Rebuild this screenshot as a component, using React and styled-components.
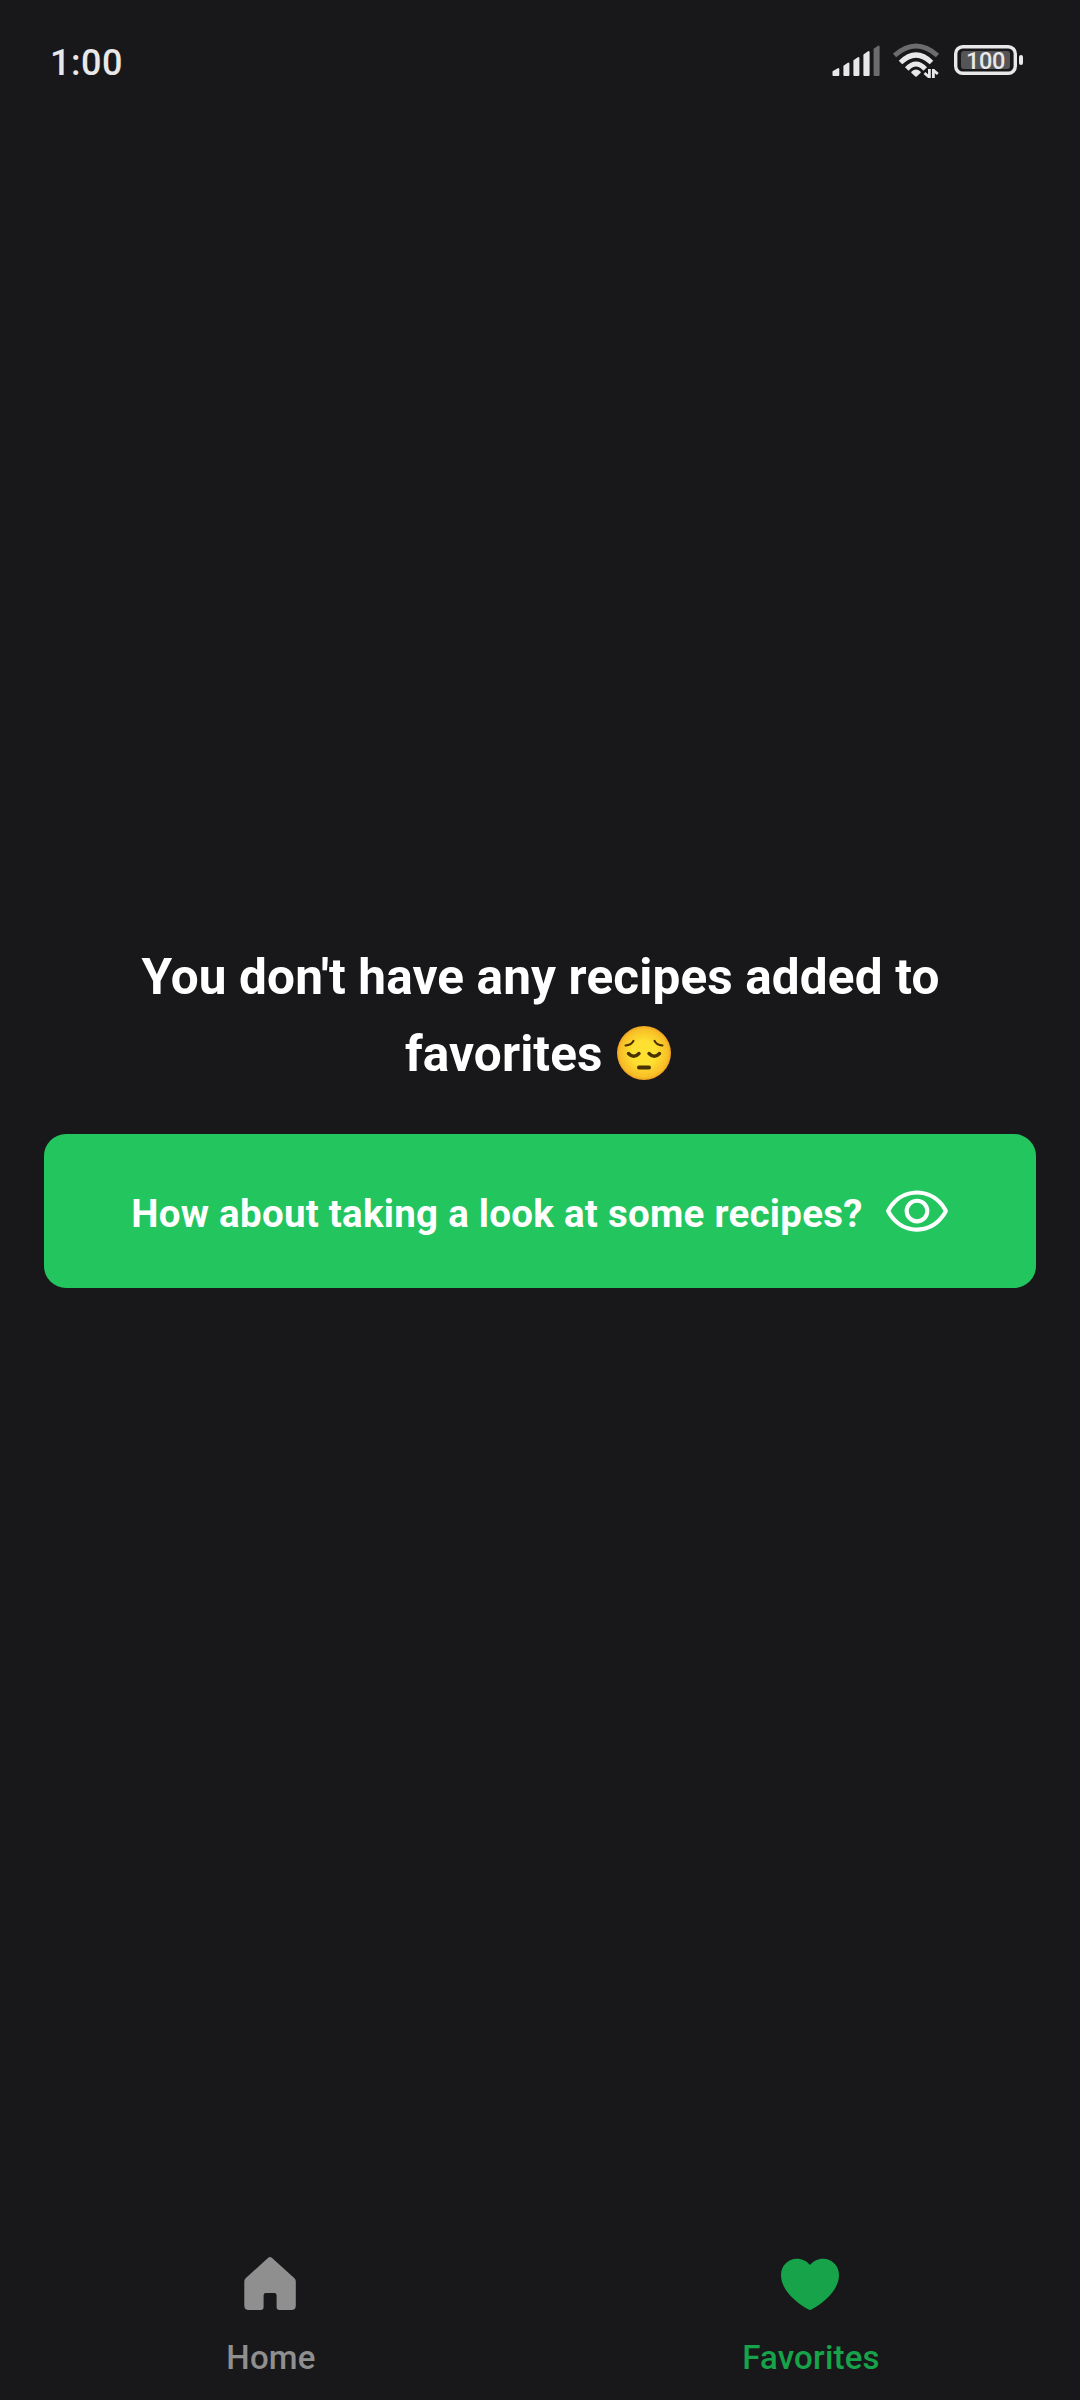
import React from "react";
import styled, { createGlobalStyle } from "styled-components";
import { PiEye } from "react-icons/pi";

const GlobalStyle = createGlobalStyle`
  *, *::before, *::after { box-sizing: border-box; }
  html, body { margin: 0; background: #18181b; }
  body { font-family: Roboto, "Noto Sans", sans-serif; }
`;

const Screen = styled.div`
  display: flex;
  flex-direction: column;
  width: 1080px;
  height: 2400px;
  overflow: hidden;
  background: #18181b;
`;

const StatusBar = styled.header`
  display: flex;
  justify-content: space-between;
  align-items: flex-start;
  height: 120px;
  padding: 41px 57px 0 50px;
`;

const Clock = styled.span`
  padding-top: 1px;
  font-size: 36px;
  font-weight: 500;
  line-height: 42px;
  letter-spacing: 0.5px;
  color: #e8e8e8;
`;

const StatusIcons = styled.div`
  display: flex;
  align-items: flex-start;
  gap: 13px;
`;

const Content = styled.main`
  flex: 1;
  display: flex;
  flex-direction: column;
  padding: 819px 44px 0;
`;

const Message = styled.h1`
  margin: 0 0 41px;
  padding-left: 1px;
  font-size: 49.5px;
  font-weight: 700;
  line-height: 77px;
  letter-spacing: 0.13px;
  text-align: center;
  color: #fff;
`;

const EmojiIcon = styled.svg`
  display: inline-block;
  width: 58px;
  height: 58px;
  margin-right: 3px;
  vertical-align: -11px;
`;

const LookButton = styled.button`
  display: flex;
  align-items: center;
  justify-content: center;
  gap: 21px;
  height: 154px;
  padding: 0 0 0 1px;
  border: 0;
  border-radius: 22px;
  background: #22c55e;
  color: #fff;
  font: 700 38.5px/55px Roboto, "Noto Sans", sans-serif;
  letter-spacing: 0.26px;
`;

const ButtonLabel = styled.span`
  padding-top: 4px;
`;

const TabBar = styled.nav`
  display: flex;
  height: 173px;
`;

const Tab = styled.a`
  flex: 1;
  display: flex;
  flex-direction: column;
  align-items: center;
  gap: 21px;
  padding-top: 24px;
  color: ${({ $active }) => ($active ? "#16a34a" : "#8f8f8f")};
`;

const TabLabel = styled.span`
  padding-left: 2px;
  font-size: 33px;
  font-weight: 500;
  line-height: 40px;
  letter-spacing: 0.2px;
`;

function SignalIcon() {
  return (
    <svg width="48" height="42" viewBox="832 41 48 42" fill="#e8e8e8" stroke="#e8e8e8" strokeWidth="2" strokeLinejoin="round">
      <path d="M833.5 71.8 L838.3 69 V75 H833.5Z M844.4 66.3 L848.4 63.5 V75 H844.4Z M854.4 60.8 L858.4 58 V75 H854.4Z M864.4 55 L868.6 52 V75 H864.4Z" />
      <path d="M874.6 49.3 L878.6 46.5 V75 H874.6Z" fill="#6c6c6e" stroke="#6c6c6e" />
    </svg>
  );
}

function WifiIcon() {
  return (
    <svg width="48" height="42" viewBox="893 41 48 42" fill="none" strokeWidth="5">
      <path d="M894.5 55.5 Q916 36.5 937.5 55.5" stroke="#6c6c6e" />
      <path d="M900.5 62.5 Q916 47.5 931.5 62.5" stroke="#e8e8e8" />
      <path d="M906.8 69 Q916 59 925.2 69" stroke="#e8e8e8" />
      <path d="M912.2 72.3 Q916 69 919.8 72.3 L916 75.7Z" fill="#e8e8e8" stroke="#e8e8e8" strokeWidth="2" strokeLinejoin="round" />
      <path d="M929.4 69 V78 M924.5 73 L929 77 M933.4 78 V69 M933.2 70 L937.8 74" stroke="#e8e8e8" strokeWidth="2.8" />
    </svg>
  );
}

function BatteryIcon() {
  return (
    <svg width="69" height="42" viewBox="954 41 69 42">
      <rect x="955.7" y="46.7" width="59.6" height="26.6" rx="7" fill="none" stroke="#e8e8e8" strokeWidth="3.4" />
      <rect x="961" y="51" width="49" height="18" rx="3" fill="#555557" />
      <rect x="1019" y="55" width="4" height="10" rx="2" fill="#e8e8e8" />
      <text x="985.5" y="69" textAnchor="middle" fontFamily="Roboto, sans-serif" fontWeight="500" fontSize="23.5" letterSpacing="-0.3" fill="#e8e8e8">100</text>
    </svg>
  );
}

function PensiveFace() {
  return (
    <EmojiIcon viewBox="0 0 58 58" role="img" aria-label="Pensive face">
      <defs>
        <radialGradient id="face">
          <stop offset="0.45" stopColor="#fde030" />
          <stop offset="0.9" stopColor="#f8bd27" />
          <stop offset="1" stopColor="#eb9f20" />
        </radialGradient>
      </defs>
      <circle cx="29" cy="29" r="27" fill="url(#face)" />
      <g fill="none" stroke="#493100" strokeLinecap="round">
        <path d="M10.5 21.5 Q16.5 21 18.5 16.8 M47.5 21.5 Q41.5 21 39.5 16.8" strokeWidth="2" />
        <path d="M13.5 29.5 Q18.7 35 24 29.5 M34 29.5 Q39.3 35 44.5 29.5" strokeWidth="3.4" />
        <path d="M24 43.5 H34" strokeWidth="4" />
      </g>
    </EmojiIcon>
  );
}

function HomeIcon() {
  return (
    <svg width="66" height="66" viewBox="0 0 66 66" fill="currentColor">
      <path d="M31.2 6.8 Q33 5.2 34.8 6.8 L57.2 27 Q58.8 28.4 58.8 30.2 V54.5 Q58.8 59 54.3 59 H42 Q39.6 59 39.6 56.6 V44.3 Q39.6 42 37.3 42 H28.9 Q26.6 42 26.6 44.3 V56.6 Q26.6 59 24.2 59 H11.8 Q7.3 59 7.3 54.5 V30.2 Q7.3 28.4 8.9 27Z" />
    </svg>
  );
}

function HeartIcon() {
  return (
    <svg width="66" height="66" viewBox="0 0 66 66" fill="currentColor">
      <path d="M33 14 C36 10 41 7.7 46 7.7 C55 7.7 62 14.8 62 24 C62 38 49 50.5 34.5 58.5 Q33 59.3 31.5 58.5 C17 50.5 4 38 4 24 C4 14.8 11 7.7 20 7.7 C25 7.7 30 10 33 14Z" />
    </svg>
  );
}

export default function App() {
  return (
    <>
      <GlobalStyle />
      <Screen>
        <StatusBar>
          <Clock>1:00</Clock>
          <StatusIcons>
            <SignalIcon />
            <WifiIcon />
            <BatteryIcon />
          </StatusIcons>
        </StatusBar>
        <Content>
          <Message>
            You don't have any recipes added to
            <br />
            favorites <PensiveFace />
          </Message>
          <LookButton>
            <ButtonLabel>How about taking a look at some recipes?</ButtonLabel>
            <PiEye size={66} />
          </LookButton>
        </Content>
        <TabBar>
          <Tab>
            <HomeIcon />
            <TabLabel>Home</TabLabel>
          </Tab>
          <Tab $active>
            <HeartIcon />
            <TabLabel>Favorites</TabLabel>
          </Tab>
        </TabBar>
      </Screen>
    </>
  );
}
